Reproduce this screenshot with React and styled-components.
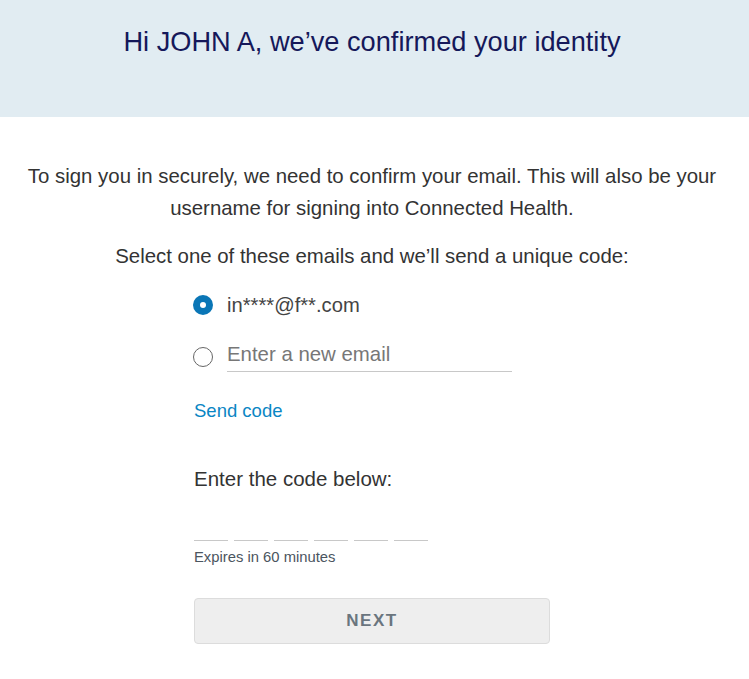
import React from "react";
import styled, { createGlobalStyle } from "styled-components";

const Global = createGlobalStyle`
  html, body { margin: 0; padding: 0; background: #fff; }
  body { font-family: "Liberation Sans", Arial, sans-serif; }
`;

const Page = styled.div`
  width: 744px;
  display: flex;
  flex-direction: column;
`;

const Header = styled.header`
  height: 117px;
  background: #e1ecf2;
  display: flex;
  justify-content: center;
  padding-top: 25px;
  box-sizing: border-box;
  margin-right: -5px;
  padding-right: 5px;
`;

const Title = styled.h1`
  margin: 0;
  font-weight: 400;
  font-size: 27.2px;
  line-height: 34px;
  color: #15185a;
`;

const Body = styled.main`
  display: flex;
  flex-direction: column;
  align-items: center;
  padding-top: 43px;
`;

const Intro = styled.p`
  margin: 0;
  text-align: center;
  font-size: 20.4px;
  line-height: 32px;
  color: #333;
  white-space: nowrap;
`;

const Prompt = styled.p`
  margin: 16px 0 0;
  text-align: center;
  font-size: 20.4px;
  line-height: 32px;
  color: #333;
  white-space: nowrap;
`;

const Column = styled.div`
  width: 356px;
  display: flex;
  flex-direction: column;
  margin-top: 18px;
`;

const Option = styled.label`
  display: flex;
  align-items: center;
  gap: 14px;
  height: 30px;
  margin-left: -1px;
`;

const NewOption = styled.label`
  display: flex;
  align-items: flex-start;
  gap: 14px;
  height: 34px;
  margin-top: 18px;
  margin-left: -1px;
`;

const Radio = styled.span`
  width: 20px;
  height: 20px;
  border-radius: 50%;
  box-sizing: border-box;
  flex: none;
  margin-top: ${(p) => p.$offset || 0}px;
  ${(p) =>
    p.$checked
      ? `background: #0a76b6; display:flex; align-items:center; justify-content:center;
         &::after { content: ""; width: 6px; height: 6px; border-radius: 50%; background: #fff; }`
      : `border: 1.5px solid #666; background: #fff;`}
`;

const OptionText = styled.span`
  font-size: 20.2px;
  color: #444;
`;

const EmailField = styled.div`
  width: 285px;
  border-bottom: 1px solid #c8c8c8;
  padding-bottom: 5px;
  font-size: 20.4px;
  line-height: 23px;
  color: #777;
  margin-top: 5px;
`;

const Link = styled.a`
  margin-top: 28px;
  font-size: 18.5px;
  color: #0a86c4;
  text-decoration: none;
`;

const CodeLabel = styled.div`
  margin-top: 45px;
  font-size: 20.5px;
  color: #333;
`;

const CodeRow = styled.div`
  display: flex;
  gap: 6px;
  margin-top: 49px;
`;

const CodeSlot = styled.span`
  width: 34px;
  height: 0;
  border-bottom: 1px solid #c8c8c8;
`;

const Expires = styled.div`
  margin-top: 8px;
  font-size: 14.8px;
  color: #4b5560;
`;

const Button = styled.button`
  margin-top: 33px;
  height: 46px;
  width: 356px;
  background: #eeeeee;
  border: 1px solid #dcdcdc;
  border-radius: 4px;
  font-family: inherit;
  font-weight: 700;
  font-size: 17px;
  letter-spacing: 1.5px;
  color: #6a757e;
`;

export default function App() {
  return (
    <Page>
      <Global />
      <Header>
        <Title>Hi JOHN A, we’ve confirmed your identity</Title>
      </Header>
      <Body>
        <Intro>
          To sign you in securely, we need to confirm your email. This will also be your
          <br />
          username for signing into Connected Health.
        </Intro>
        <Prompt>Select one of these emails and we’ll send a unique code:</Prompt>
        <Column>
          <Option>
            <Radio $checked />
            <OptionText>in****@f**.com</OptionText>
          </Option>
          <NewOption>
            <Radio $offset={9} />
            <EmailField>Enter a new email</EmailField>
          </NewOption>
          <Link href="#">Send code</Link>
          <CodeLabel>Enter the code below:</CodeLabel>
          <CodeRow>
            {[0, 1, 2, 3, 4, 5].map((i) => (
              <CodeSlot key={i} />
            ))}
          </CodeRow>
          <Expires>Expires in 60 minutes</Expires>
          <Button>NEXT</Button>
        </Column>
      </Body>
    </Page>
  );
}
